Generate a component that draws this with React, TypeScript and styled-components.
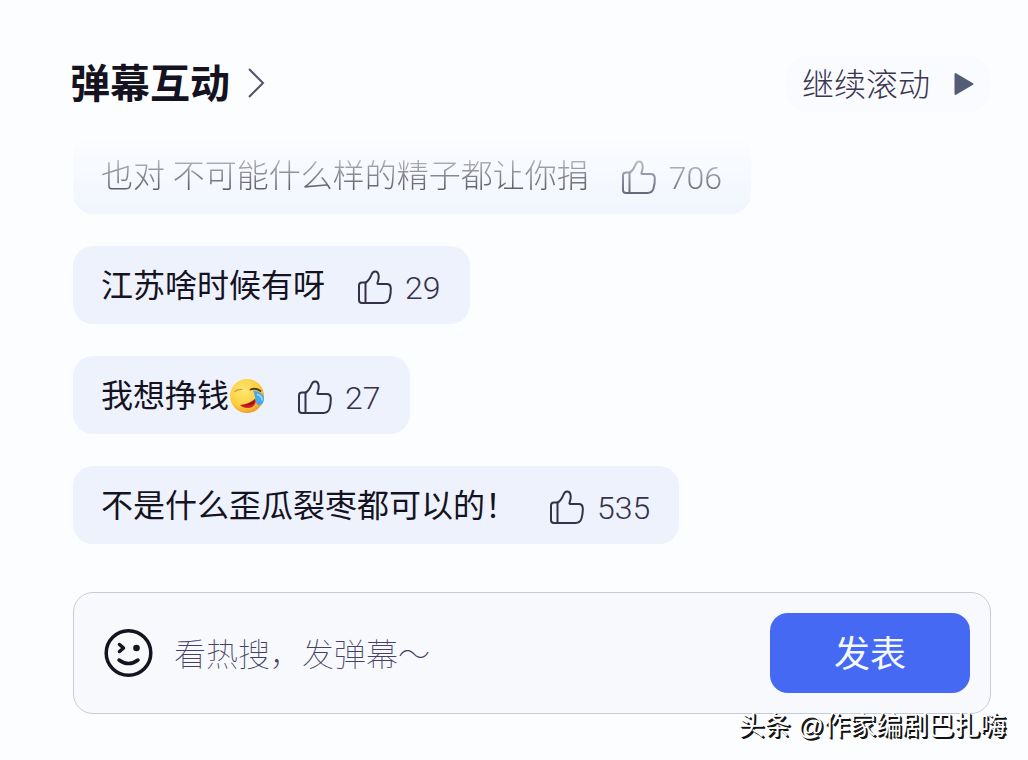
import React from "react";
import styled, { createGlobalStyle } from "styled-components";

const Global = createGlobalStyle`
  *, *::before, *::after { box-sizing: border-box; }
  body {
    margin: 0;
    background: #fcfdff;
    color: #15131f;
    font-family: Roboto, "Noto Sans CJK SC", sans-serif;
    font-size: 32px;
    line-height: 40px;
  }
  button, input { font: inherit; }
`;

const Page = styled.main`
  position: relative;
  min-height: 100vh;
  padding: 56px 37px 45px 73px;
`;

const Header = styled.header`
  display: flex;
  align-items: center;
  justify-content: space-between;
  height: 56px;
`;

const Title = styled.h1`
  margin: 0;
  font-size: 40px;
  line-height: 56px;
  font-weight: 700;
`;

const TitleLink = styled.a`
  display: flex;
  align-items: center;
  gap: 16px;
  margin-left: -3px;
  color: #15131f;
  text-decoration: none;
`;

const Label = styled.span`
  padding-top: 2px;
`;

const ScrollButton = styled.button`
  display: flex;
  align-items: center;
  gap: 24px;
  height: 56px;
  padding: 0 17px;
  border: 0;
  border-radius: 24px;
  background: #fafbfe;
  color: #3a3650;
  font-weight: 300;
`;

const Comments = styled.ul`
  display: flex;
  flex-direction: column;
  align-items: flex-start;
  gap: 32px;
  margin: 24px 0 48px;
  padding: 0;
  list-style: none;
`;

const Bubble = styled.li<{ $fading?: boolean }>`
  display: flex;
  align-items: center;
  gap: 32px;
  height: 78px;
  padding: 0 29px 0 28px;
  border-radius: 20px;
  background: ${(p) => (p.$fading ? "#f0f5fe" : "#eef2fd")};
  font-weight: ${(p) => (p.$fading ? 300 : 400)};
  mask-image: ${(p) => (p.$fading ? "linear-gradient(transparent, #000)" : "none")};
`;

const Message = styled.span`
  display: flex;
  align-items: center;
  padding-top: 2px;
  white-space: nowrap;
`;

const Like = styled.button`
  display: flex;
  align-items: center;
  gap: 12px;
  padding: 6px 0 0;
  border: 0;
  background: none;
  color: #35314a;
  font-weight: 300;
`;

const Composer = styled.form`
  display: flex;
  align-items: center;
  gap: 20px;
  height: 122px;
  padding: 0 20px 0 30px;
  border: 1px solid #c5ccd8;
  border-radius: 20px;
  background: #f8f9fd;
`;

const EmojiButton = styled.button`
  display: flex;
  padding: 0;
  border: 0;
  background: none;
  color: #15131f;
`;

const TextBox = styled.input`
  flex: 1;
  min-width: 0;
  height: 48px;
  padding: 3px 0 0;
  border: 0;
  outline: 0;
  background: none;
  color: #15131f;
  font-weight: 100;
  &::placeholder { color: #453f68; opacity: 1; }
`;

const Submit = styled.button`
  width: 200px;
  height: 80px;
  padding: 4px 0 0;
  border: 0;
  border-radius: 18px;
  background: #4569f2;
  color: #f4f8ff;
  font-size: 36px;
`;

const Watermark = styled.div`
  position: absolute;
  right: 22px;
  bottom: 14px;
  color: #fff;
  font-family: "Liberation Sans", "Noto Sans CJK SC", sans-serif;
  font-size: 26px;
  white-space: nowrap;
  text-shadow: 2px 2px 0 #111, 1px 1px 0 #111;
`;

const Thumb = () => (
  <svg width="36" height="36" viewBox="0 0 36 36" fill="none" stroke="currentColor" strokeWidth="2" strokeLinejoin="round" strokeLinecap="round" aria-hidden="true">
    <path d="M8.500 12.500H5Q2 12.500 2 15.500V30q0 3 3 3H26.500c3.500 0 5-1.500 6-4.500 1-3.500 1.400-6.500 1.300-10-.1-3-1.300-4.500-4-4.500H21.300c-.8 0-1-.5-.8-1.200.8-2.300 1.500-4.300 1.200-6.800C21.400 3 20 1.500 18 1.500c-2 0-2.800 1.200-3.500 3.200C13.200 8 11.500 11 8.500 12.800Z" />
    <path d="M8.500 12.500v20.500" />
  </svg>
);

const Chevron = () => (
  <svg width="20" height="32" viewBox="0 0 20 32" fill="none" stroke="#57516c" strokeWidth="2" aria-hidden="true">
    <path d="M3 1l14 14L3 29" />
  </svg>
);

const Play = () => (
  <svg width="20" height="24" viewBox="0 0 20 24" aria-hidden="true">
    <path d="M1.500 2v20L18.500 12Z" fill="#545d75" stroke="#545d75" strokeWidth="2" strokeLinejoin="round" />
  </svg>
);

const Wink = () => (
  <svg width="50" height="50" viewBox="0 0 50 50" fill="none" stroke="currentColor" strokeWidth="3.500" strokeLinecap="round" strokeLinejoin="round" aria-hidden="true">
    <circle cx="24.500" cy="25" r="22.300" />
    <path d="M15.500 16.500l4 3.500-4 3.500M15 32q9.500 7 19 0" />
    <circle cx="32.500" cy="20" r="3.300" fill="currentColor" stroke="none" />
  </svg>
);

const LaughCry = () => (
  <svg width="36" height="36" viewBox="0 0 36 36" role="img" aria-label="笑哭">
    <defs>
      <radialGradient id="face" cx="40%" cy="35%" r="65%">
        <stop offset="0" stopColor="#ffe873" />
        <stop offset="0.7" stopColor="#fbcf3e" />
        <stop offset="1" stopColor="#efa02a" />
      </radialGradient>
    </defs>
    <circle cx="18" cy="18" r="17" fill="url(#face)" />
    <path d="M6 13.500q3-2.500 7-2" fill="none" stroke="#d29a35" strokeWidth="1.200" strokeLinecap="round" />
    <path d="M21.500 11.500q5-2 10 1.500" fill="none" stroke="#5d3815" strokeWidth="1.800" strokeLinecap="round" />
    <path d="M11 27q9-1 15.500-6.500c1.500 5-2 9.500-7.500 9.500-3.500 0-6.500-1-8-3Z" fill="#d3201f" />
    <path d="M13 27.200q7-.5 13-5.500l-1 3.500q-4.500 3.300-12 2Z" fill="#8d1116" />
    <path d="M24 12.500c6 .5 11 3.500 11 8 0 5-3 7.500-6 6.500-3.500-1-2-9-5-14.500Z" fill="#49a9e8" />
    <path d="M28.500 16.500q4.500 1.500 4.500 5.500" fill="none" stroke="#9bdcf9" strokeWidth="1.500" strokeLinecap="round" />
  </svg>
);

const comments = [
  { text: "也对 不可能什么样的精子都让你捐", likes: 706, fading: true },
  { text: "江苏啥时候有呀", likes: 29 },
  { text: "我想挣钱", likes: 27, emoji: true },
  { text: "不是什么歪瓜裂枣都可以的！", likes: 535 },
];

export default function App() {
  return (
    <>
      <Global />
      <Page>
        <Header>
          <Title>
            <TitleLink href="#comments">
              <Label>弹幕互动</Label>
              <Chevron />
            </TitleLink>
          </Title>
          <ScrollButton type="button">
            <Label>继续滚动</Label>
            <Play />
          </ScrollButton>
        </Header>
        <Comments id="comments">
          {comments.map((c) => (
            <Bubble key={c.text} $fading={c.fading}>
              <Message>
                {c.text}
                {c.emoji && <LaughCry />}
              </Message>
              <Like type="button">
                <Thumb />
                {c.likes}
              </Like>
            </Bubble>
          ))}
        </Comments>
        <Composer onSubmit={(e) => e.preventDefault()}>
          <EmojiButton type="button" aria-label="表情">
            <Wink />
          </EmojiButton>
          <TextBox type="text" aria-label="发弹幕" placeholder="看热搜，发弹幕～" />
          <Submit type="submit">发表</Submit>
        </Composer>
        <Watermark>头条 @作家编剧巴扎嗨</Watermark>
      </Page>
    </>
  );
}
